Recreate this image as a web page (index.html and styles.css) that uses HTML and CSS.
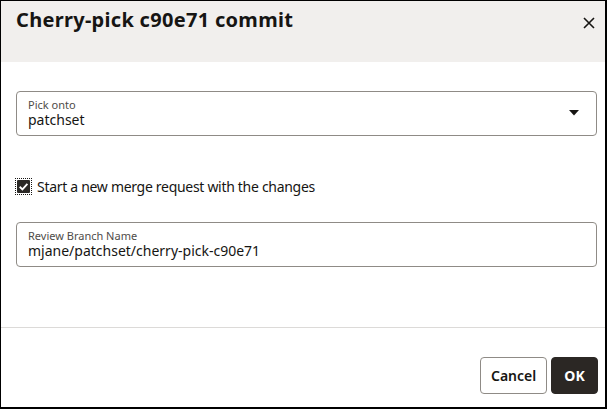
FILE: index.html
```html
<!DOCTYPE html>
<html>
<head>
<meta charset="utf-8">
<link rel="stylesheet" href="styles.css">
</head>
<body>
<div class="dialog">
  <header class="header">
    <h1 class="title">Cherry-pick c90e71 commit</h1>
    <button class="close" aria-label="Close">
      <svg width="12" height="12" viewBox="0 0 12 12"><path d="M1 1L11 11M11 1L1 11" stroke="#161513" stroke-width="1.6" fill="none"/></svg>
    </button>
  </header>
  <main class="body">
    <div class="field select">
      <div class="field-text">
        <span class="label">Pick onto</span>
        <span class="value">patchset</span>
      </div>
      <svg class="caret" width="10" height="6" viewBox="0 0 10 6"><path d="M0 0H10L5 5.5Z" fill="#161513"/></svg>
    </div>
    <label class="check">
      <span class="box">
        <svg width="12" height="12" viewBox="0 0 12 12"><path d="M2.5 6.2L5 8.6L9.6 3.6" stroke="#fff" stroke-width="1.7" fill="none"/></svg>
      </span>
      <span class="check-text">Start a new merge request with the changes</span>
    </label>
    <div class="field">
      <div class="field-text">
        <span class="label">Review Branch Name</span>
        <span class="value">mjane/patchset/cherry-pick-c90e71</span>
      </div>
    </div>
  </main>
  <footer class="footer">
    <button class="btn btn-outline">Cancel</button>
    <button class="btn btn-solid">OK</button>
  </footer>
</div>
</body>
</html>
```
FILE: styles.css
```css
* { box-sizing: border-box; }
html, body { margin: 0; padding: 0; }
body {
  font-family: "Noto Sans", "Open Sans", sans-serif;
  color: #161513;
  background: #fff;
}
.dialog {
  width: 607px;
  height: 409px;
  border-style: solid;
  border-color: #000;
  border-width: 1px 2px 2px 1px;
  display: flex;
  flex-direction: column;
  background: #fff;
}
.header {
  height: 61px;
  background: #f1efed;
  display: flex;
  justify-content: space-between;
  align-items: flex-start;
  padding: 0 0 0 15px;
}
.title {
  margin: 4px 0 0;
  font-size: 20px;
  font-weight: 700;
  line-height: 30px;
  letter-spacing: 0.3px;
}
.close {
  border: 0;
  background: transparent;
  padding: 0;
  width: 24px;
  height: 24px;
  margin: 10px 4px 0 0;
  display: flex;
  align-items: center;
  justify-content: center;
}
.body {
  flex: 1;
  padding: 29px 8px 0 15px;
  display: flex;
  flex-direction: column;
  border-bottom: 1px solid #dcdad8;
}
.field {
  height: 45px;
  border: 1px solid #8f8b86;
  border-radius: 4px;
  display: flex;
  align-items: center;
  padding: 0 11px 0 11px;
}
.field-text {
  flex: 1;
  display: flex;
  flex-direction: column;
}
.label {
  font-size: 11px;
  line-height: 12px;
  color: #4f4c49;
}
.value {
  font-size: 14px;
  line-height: 17px;
}
.caret { margin-right: 6px; margin-top: -2px; }
.check {
  display: flex;
  align-items: center;
  margin-top: 42px;
  margin-bottom: 28px;
  height: 16px;
}
.box {
  width: 15px;
  height: 15px;
  outline: 1px dotted #161513;
  outline-offset: 0;
  padding: 1px;
  display: flex;
}
.box svg {
  background: #2b2926;
  border-radius: 1px;
  width: 13px;
  height: 13px;
}
.check-text {
  font-size: 14px;
  letter-spacing: -0.3px;
  margin-left: 6px;
}
.footer {
  height: 79px;
  display: flex;
  justify-content: flex-end;
  align-items: flex-start;
  gap: 4px;
  padding: 29px 7px 0 0;
}
.btn {
  font-family: inherit;
  font-size: 14px;
  font-weight: 600;
  height: 37px;
  border-radius: 4px;
  padding: 0 10px;
  cursor: pointer;
}
.btn-outline {
  background: #fff;
  border: 1px solid #8f8b86;
  color: #161513;
  width: 67px;
}
.btn-solid {
  background: #2b2724;
  border: 1px solid #2b2724;
  color: #fff;
  width: 47px;
  font-weight: 700;
}
```
